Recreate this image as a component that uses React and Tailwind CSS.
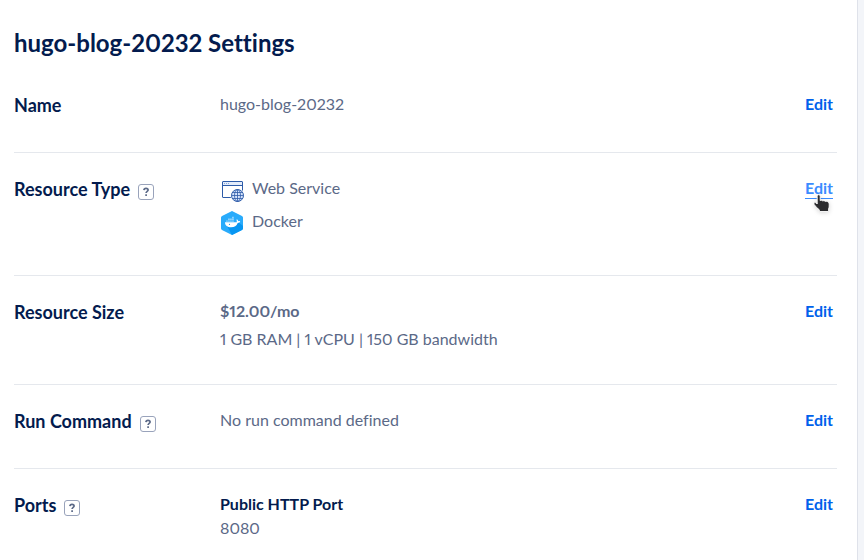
import React from 'react';

const HelpButton = ({ topic }) => (
  <button
    type="button"
    aria-label={`Help: ${topic}`}
    className="flex h-4 w-4 items-center justify-center rounded-[3px] border border-[#99a3bb] text-[#5b6987]"
  >
    <svg viewBox="0 0 14 14" className="h-3.5 w-3.5" fill="none" stroke="currentColor" strokeWidth="1.7">
      <path d="M4.9 5.1C5 3.9 5.8 3.3 7 3.3s2.1.7 2.1 1.7c0 1.4-2 1.4-2 3.1" />
      <path d="M7.1 9.3v1.8" />
    </svg>
  </button>
);

const WebServiceIcon = () => (
  <svg viewBox="0 0 24 24" className="mt-0.5 h-6 w-6 shrink-0" fill="none" stroke="#2d5ba8" aria-hidden="true">
    <rect x="2.5" y="3.5" width="20" height="16" rx="0.5" fill="#fff" />
    <path d="M3 4h19v3H3z" fill="#e3ecfa" stroke="none" />
    <path d="M2.5 7.5h20" />
    <path d="M4 5.5h1M6 5.5h1M8 5.5h1" stroke="#8aa8dc" />
    <circle cx="17.5" cy="17.500" r="7" fill="#fff" stroke="none" />
    <circle cx="17.5" cy="17.5" r="6" fill="#d5e3fb" />
    <ellipse cx="17.5" cy="17.5" rx="3" ry="6" strokeWidth="0.8" />
    <path d="M17.5 11.5v12M11.5 17.5h12M12.6 14.5h9.8M12.6 20.5h9.8" strokeWidth="0.8" />
  </svg>
);

const DockerIcon = () => (
  <svg viewBox="0 0 24 24" className="mt-0.5 h-6 w-6 shrink-0" aria-hidden="true">
    <path d="M12 0l10 5c.6.3 1 .9 1 1.5v11c0 .6-.4 1.2-1 1.5l-10 5-10-5c-.6-.3-1-.9-1-1.5v-11C1 5.9 1.4 5.3 2 5z" fill="#29abfb" />
    <path d="M18 11l5 4v2.5c0 .6-.4 1.2-1 1.5l-10 5-5-9z" fill="#0796f2" />
    <path d="M5 11.3h11.6c.4-.8.3-1.7-.2-2.4l.6-.7c.8.5 1.2 1.2 1.2 2 .7-.2 1.5-.1 2 .3-.4 1-1.3 1.4-2.5 1.4-1.1 2.9-3.2 4.4-6.6 4.400C7.400 16.300 5 14.600 5 11.300z" fill="#fff" />
    <path d="M6.2 9.4h1.5v1.4H6.200zM8.200 9.400h1.500v1.400H8.200zM10.200 9.400h1.500v1.400h-1.500zM12.200 9.400h1.500v1.400h-1.500zM8.200 7.600h1.500V9H8.200zM10.200 7.600h1.500V9h-1.500zM12.200 7.600h1.500V9h-1.500zM12.200 5.800h1.500v1.400h-1.500z" fill="#a6dcff" />
    <circle cx="9.5" cy="13.3" r="0.6" fill="#1090e8" />
  </svg>
);

// Hand pointer shown over the hovered link
const Pointer = () => (
  <svg viewBox="0 0 18 20" className="pointer-events-none absolute left-2 top-[18px] h-5 w-[18px] drop-shadow-sm" aria-hidden="true">
    <path
      d="M4.2 2.4C4.2.2 7.2.2 7.2 2.4v4.2c.8-.5 1.900-.4 2.500.3.9-.4 2-.2 2.600.5 1.400-.4 3.200.3 3.700 1.800.4 2 .2 4-.4 5.800v2.500H6.300v-1.700C4.400 14.300 2.300 12.500 1 10.300c-.5-1.500 1.200-2.200 2.200-1.300l1 1z"
      fill="#2b2b2e"
      stroke="#fff"
      strokeWidth="0.9"
    />
  </svg>
);

const EditLink = ({ label, hovered }) => (
  <div className="relative shrink-0 pr-1">
    <a
      href="#edit"
      aria-label={`Edit ${label}`}
      className={`block font-bold ${
        hovered ? 'text-[#3b8cff] underline decoration-1 underline-offset-4' : 'text-[#0061eb]'
      }`}
    >
      Edit
    </a>
    {hovered && <Pointer />}
  </div>
);

const SettingRow = ({ label, help, hovered, children }) => (
  <section className="flex border-b border-[#e5e8ed] pt-[23px] pb-[33px] last:border-b-0">
    <div className="flex w-[206px] shrink-0 items-start gap-2">
      <h2 className="text-lg leading-[27px] font-bold text-[#031b4e]">{label}</h2>
      {help && (
        <div className="pt-2">
          <HelpButton topic={label} />
        </div>
      )}
    </div>
    <div className="min-w-0 flex-1">{children}</div>
    <EditLink label={label} hovered={hovered} />
  </section>
);

export default function App() {
  return (
    <div className="flex min-h-screen bg-[#f3f5f9] pr-1.5 font-['Lato','Liberation_Sans',sans-serif] text-base leading-6 text-[#5b6987] proportional-nums [font-variant-ligatures:none]">
      <main className="h-screen min-w-0 flex-1 overflow-hidden border-r border-[#dfe2ea] bg-white pt-[27px] pr-5 pl-3.5">
        <h1 className="mb-2.5 text-2xl leading-8 font-bold text-[#031b4e]">hugo-blog-20232 Settings</h1>

        <SettingRow label="Name">
          <p>hugo-blog-20232</p>
        </SettingRow>

        <SettingRow label="Resource Type" help hovered>
          <ul>
            <li className="flex h-[33px] gap-2">
              <WebServiceIcon />
              <span>Web Service</span>
            </li>
            <li className="flex h-[33px] gap-2">
              <DockerIcon />
              <span>Docker</span>
            </li>
          </ul>
        </SettingRow>

        <SettingRow label="Resource Size">
          <p className="mb-1 font-bold">$12.00/mo</p>
          <p>1 GB RAM | 1 vCPU | 150 GB bandwidth</p>
        </SettingRow>

        <SettingRow label="Run Command" help>
          <p>No run command defined</p>
        </SettingRow>

        <SettingRow label="Ports" help>
          <p className="font-bold text-[#031b4e]">Public HTTP Port</p>
          <p>8080</p>
        </SettingRow>
      </main>
    </div>
  );
}
